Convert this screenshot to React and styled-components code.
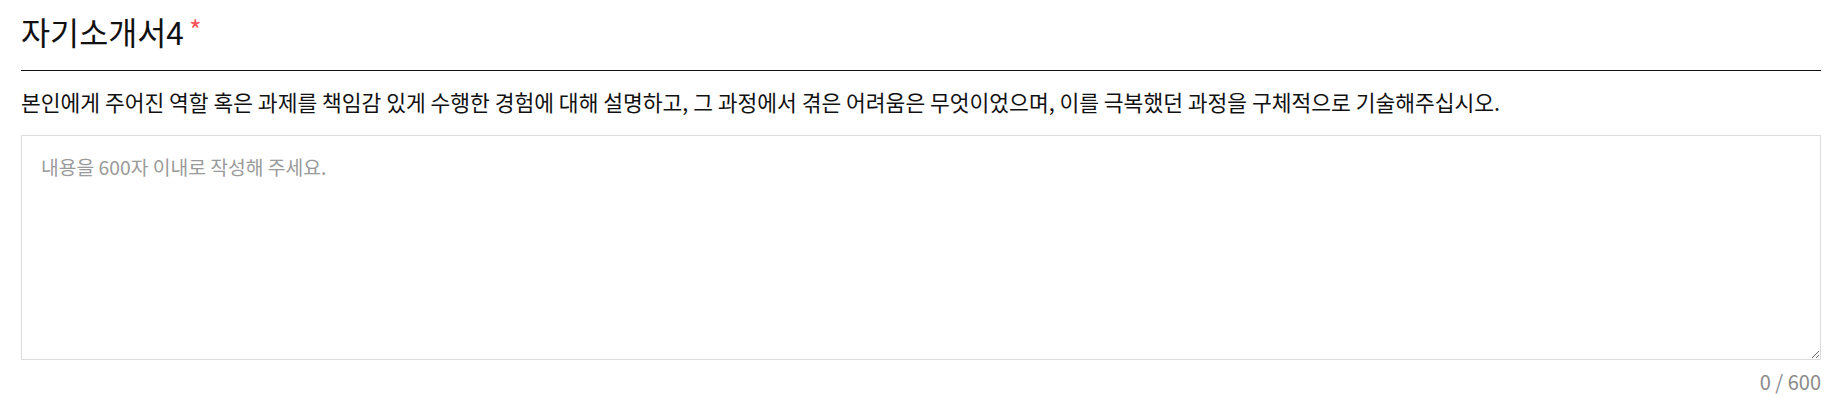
import React, { useState } from "react";
import styled, { createGlobalStyle } from "styled-components";

const Global = createGlobalStyle`
  html, body { margin: 0; padding: 0; background: #fff; }
  body { font-family: "Noto Sans CJK KR", "Noto Sans", sans-serif; }
`;

const Section = styled.section`
  padding: 0 9px 0 21px;
  display: flex;
  flex-direction: column;
`;

const Header = styled.div`
  display: flex;
  align-items: center;
  height: 60px;
  padding-bottom: 10px;
  border-bottom: 1px solid #111;
`;

const Title = styled.h2`
  margin: 0;
  font-size: 31.6px;
  font-weight: 400;
  line-height: 60px;
  color: #111;
`;

const Required = styled.span`
  color: #f4515a;
  font-size: 27px;
  margin-left: 5px;
  vertical-align: 4px;
`;

const Question = styled.p`
  margin: 16px 0 0;
  font-size: 21.5px;
  line-height: 30px;
  color: #111;
`;

const Area = styled.textarea`
  margin-top: 18px;
  box-sizing: border-box;
  width: 100%;
  height: 225px;
  padding: 19px 19px;
  border: 1px solid #dcdcdc;
  border-radius: 0;
  font-family: inherit;
  font-size: 19.3px;
  line-height: 24px;
  color: #333;
  outline: none;
  resize: vertical;
  &::placeholder { color: #9a9a9a; }
`;

const Counter = styled.div`
  margin-top: 10px;
  text-align: right;
  font-size: 20px;
  line-height: 24px;
  color: #8a8a8a;
`;

export default function App() {
  const [text, setText] = useState("");
  return (
    <>
      <Global />
      <Section>
        <Header>
          <Title>
            자기소개서4<Required>*</Required>
          </Title>
        </Header>
        <Question>
          본인에게 주어진 역할 혹은 과제를 책임감 있게 수행한 경험에 대해 설명하고, 그 과정에서 겪은 어려움은 무엇이었으며, 이를 극복했던 과정을 구체적으로 기술해주십시오.
        </Question>
        <Area
          placeholder="내용을 600자 이내로 작성해 주세요."
          maxLength={600}
          value={text}
          onChange={(e) => setText(e.target.value)}
        />
        <Counter>{text.length} / 600</Counter>
      </Section>
    </>
  );
}
